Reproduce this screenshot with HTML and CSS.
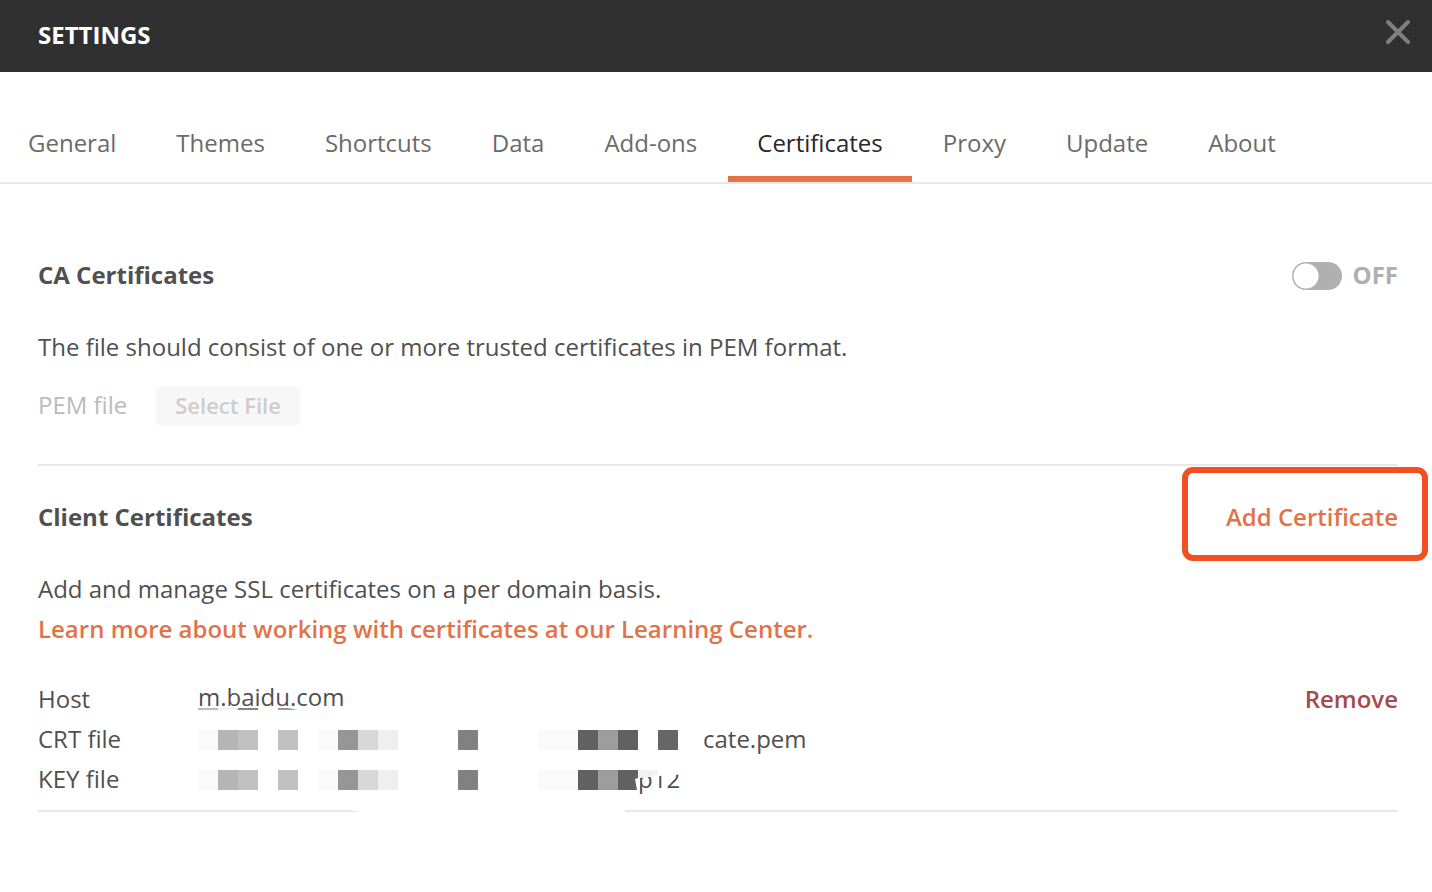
FILE: index.html
```html
<!DOCTYPE html>
<html lang="en">
<head>
<meta charset="utf-8">
<title>Settings</title>
<link rel="stylesheet" href="styles.css">
</head>
<body>
<header class="header">
  <h1 class="title">SETTINGS</h1>
  <button class="close" type="button" aria-label="Close">
    <svg width="26" height="26" viewBox="0 0 26 26" aria-hidden="true"><path d="M3 3 23 23M23 3 3 23" stroke="#808080" stroke-width="4" stroke-linecap="round"/></svg>
  </button>
</header>
<nav class="tabs">
  <a class="tab" href="#">General</a>
  <a class="tab" href="#">Themes</a>
  <a class="tab" href="#">Shortcuts</a>
  <a class="tab" href="#">Data</a>
  <a class="tab" href="#">Add-ons</a>
  <a class="tab active" href="#" aria-current="page">Certificates</a>
  <a class="tab" href="#">Proxy</a>
  <a class="tab" href="#">Update</a>
  <a class="tab" href="#">About</a>
</nav>
<main class="content">
  <section class="ca">
    <div class="row">
      <h2 class="heading">CA Certificates</h2>
      <label class="switch"><input class="toggle" type="checkbox"><span>OFF</span></label>
    </div>
    <p class="text">The file should consist of one or more trusted certificates in PEM format.</p>
    <div class="pem">
      <span class="pem-label" id="pem-label">PEM file</span>
      <button class="select" type="button" disabled aria-describedby="pem-label">Select File</button>
    </div>
  </section>
  <section class="client">
    <div class="row">
      <h2 class="heading">Client Certificates</h2>
      <button class="add" type="button">Add Certificate</button>
    </div>
    <p class="text">Add and manage SSL certificates on a per domain basis.</p>
    <a class="learn" href="#">Learn more about working with certificates at our Learning Center.</a>
    <div class="certificate">
      <dl class="details">
        <dt>Host</dt>
        <dd class="value host">m.baidu.com
          <svg class="marks" width="100" height="2" viewBox="0 0 100 2" aria-hidden="true"><path fill="#bcbcbc" d="M0 0h20v2H0z"/><path fill="#f0f0f0" d="M20 0h20v2H20z"/><path fill="#848484" d="M40 0h20v2H40z"/><path fill="#999" d="M80 0h10l10 2H80z"/></svg>
        </dd>
        <dt>CRT file</dt>
        <dd class="value">
          <svg class="mosaic" width="505" height="20" viewBox="0 0 505 20" shape-rendering="crispEdges" aria-hidden="true">
            <g id="mosaic"><path fill="#fafafa" d="M0 0h20v20H0zM120 0h20v20h-20zM340 0h40v20h-40z"/><path fill="#b5b5b5" d="M20 0h20v20H20z"/><path fill="#c1c1c1" d="M40 0h20v20H40zM80 0h20v20H80z"/><path fill="#969696" d="M140 0h20v20h-20z"/><path fill="#d8d8d8" d="M160 0h20v20h-20z"/><path fill="#efefef" d="M180 0h20v20h-20z"/><path fill="#818181" d="M260 0h20v20h-20z"/><path fill="#616161" d="M380 0h20v20h-20zM420 0h20v20h-20z"/><path fill="#9d9d9d" d="M400 0h20v20h-20z"/></g>
            <path fill="#666" d="M460 0h20v20h-20z"/>
          </svg>cate.pem
        </dd>
        <dt>KEY file</dt>
        <dd class="value">
          <svg class="mosaic" width="440" height="20" viewBox="0 0 440 20" shape-rendering="crispEdges" aria-hidden="true"><use href="#mosaic"/></svg>p12
          <svg class="cover" width="54" height="20" viewBox="0 0 54 20" aria-hidden="true"><path fill="#fff" d="M6 0h48v4L26 6 8 8v12H5L3 9l3-1z"/><path fill="#f2f2f2" d="M6 0h20v5L6 8z"/></svg>
        </dd>
      </dl>
      <button class="remove" type="button">Remove</button>
      <svg class="gap" width="276" height="2" viewBox="0 0 276 2" aria-hidden="true"><path fill="#fff" d="M0 0h276l-2 2H12z"/></svg>
    </div>
  </section>
</main>
</body>
</html>
```
FILE: styles.css
```css
* { box-sizing: border-box; }

body {
  margin: 0;
  background: #fff;
  color: #505050;
  font: 24px/40px "Open Sans", "Noto Sans", sans-serif;
}

h1, h2, p, dl, dd { margin: 0; }

button {
  padding: 0;
  border: 0;
  background: none;
  font: inherit;
}

a { text-decoration: none; }
svg { display: block; flex: none; }

.header {
  display: flex;
  align-items: center;
  justify-content: space-between;
  height: 72px;
  padding: 0 21px 2px 38px;
  background: #303030;
}

.title {
  color: #fff;
  font-size: 24px;
  font-weight: 700;
}

.close { padding-bottom: 6px; }

.tabs {
  display: flex;
  gap: 2px;
  height: 112px;
  border-bottom: 2px solid #e8e8e8;
}

.tab {
  flex: none;
  padding: 51px 29px 0;
  color: #6b6b6b;
}

.tab:first-child { padding-left: 28px; }

.active {
  border-bottom: 6px solid #e27348;
  color: #282828;
}

.content { padding: 71px 34px 0 38px; }

.ca {
  padding-bottom: 38px;
  border-bottom: 2px solid #e8e8e8;
}

.row {
  display: flex;
  align-items: center;
  justify-content: space-between;
}

.heading {
  font-size: 24px;
  font-weight: 700;
}

.switch {
  display: flex;
  align-items: center;
  gap: 11px;
  color: #b0b0b0;
  font-weight: 700;
}

.toggle {
  appearance: none;
  width: 50px;
  height: 28px;
  margin: 2px 0 0;
  border-radius: 14px;
  background: radial-gradient(circle at 14px 14px, #fff 12px, #b0b0b0 13px);
}

.text { margin-top: 32px; }

.pem {
  display: flex;
  align-items: center;
  gap: 29px;
  margin-top: 19px;
  color: #bbb;
}

.pem-label {
  padding-bottom: 2px;
  line-height: 38px;
}

.select {
  padding: 0 19px 2px;
  border-radius: 6px;
  background: #f7f7f7;
  color: #cdcdcd;
  font-size: 22px;
  font-weight: 600;
  line-height: 38px;
}

.client { padding-top: 31px; }

.add {
  position: relative;
  color: #e27348;
  font-weight: 600;
}

.add::after {
  content: "";
  position: absolute;
  inset: -30px -30px -24px -44px;
  border: 6px solid #f05022;
  border-radius: 11px;
}

.learn {
  color: #e27348;
  font-weight: 600;
}

.certificate {
  position: relative;
  display: flex;
  align-items: flex-start;
  justify-content: space-between;
  margin-top: 30px;
  padding-bottom: 11px;
  border-bottom: 2px solid #e8e8e8;
}

.details {
  display: grid;
  grid-template-columns: 160px auto;
}

.value {
  position: relative;
  display: flex;
  align-items: center;
}

.host {
  padding-bottom: 4px;
  line-height: 36px;
}

.mosaic { margin-top: 2px; }

.marks {
  position: absolute;
  top: 29px;
  left: 0;
}

.cover {
  position: absolute;
  top: 11px;
  left: 434px;
}

.remove {
  color: #a9494a;
  font-weight: 600;
}

.gap {
  position: absolute;
  bottom: -2px;
  left: 312px;
}
```
